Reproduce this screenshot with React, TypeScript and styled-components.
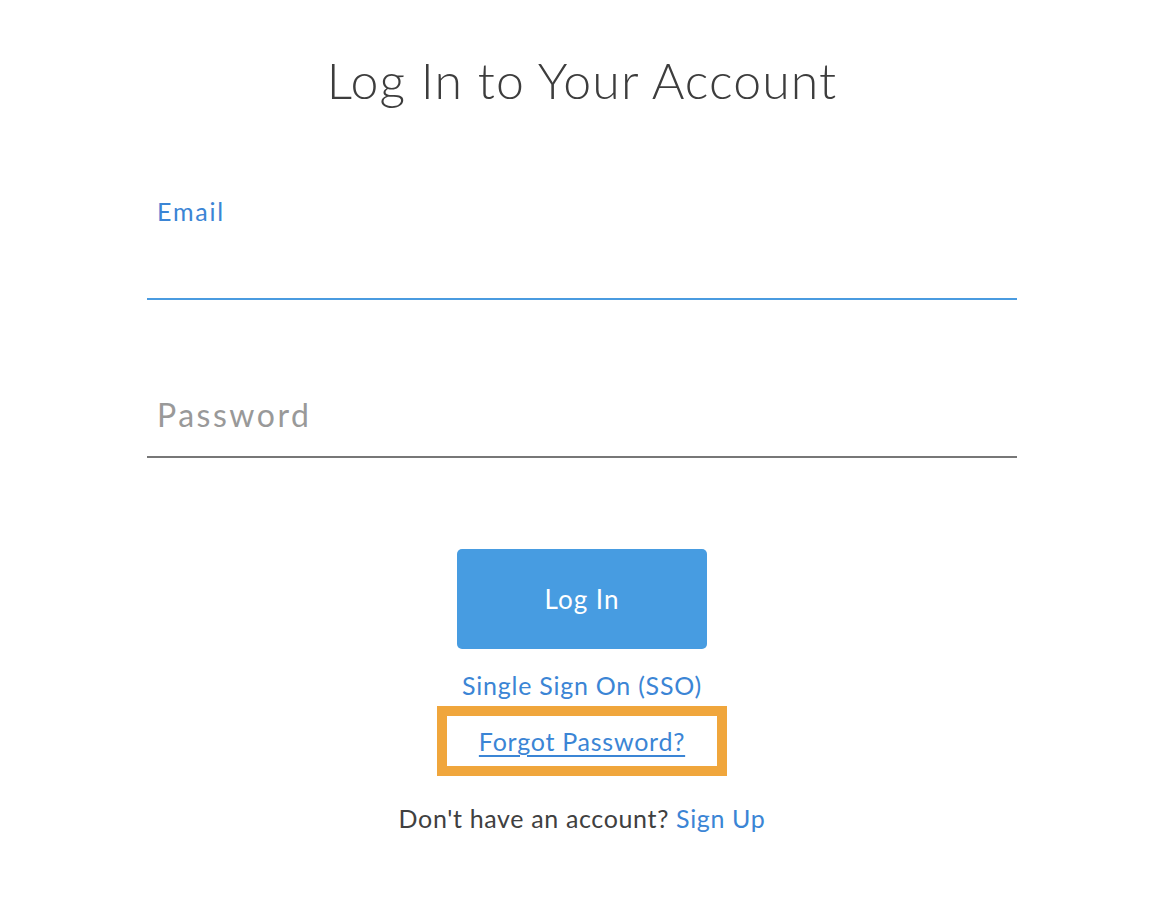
import React from "react";
import styled, { createGlobalStyle } from "styled-components";

const GlobalStyle = createGlobalStyle`
  html, body {
    margin: 0;
    padding: 0;
    background: #ffffff;
  }
  body {
    font-family: Lato, "Open Sans", "Liberation Sans", sans-serif;
    color: #404040;
  }
`;

const BLUE = "#3b85d5";

const Page = styled.main`
  width: 870px;
  margin: 0 auto;
  padding: 48px 0 60px 4px;
  display: flex;
  flex-direction: column;
`;

const Title = styled.h1`
  margin: 0;
  text-align: center;
  font-size: 50px;
  line-height: 64px;
  font-weight: 300;
  color: #3d3d3d;
  letter-spacing: 1.1px;
`;

const Field = styled.div<{ $gap: number }>`
  display: flex;
  flex-direction: column;
  margin-top: ${(p) => p.$gap}px;
`;

const Label = styled.label`
  padding-left: 10px;
  font-size: 25px;
  line-height: 30px;
  letter-spacing: 1.8px;
  color: ${BLUE};
`;

const Input = styled.input<{ $focused?: boolean }>`
  box-sizing: border-box;
  width: 100%;
  height: ${(p) => (p.$focused ? 74 : 66)}px;
  padding: 0 10px ${(p) => (p.$focused ? 0 : 20)}px;
  border: none;
  border-bottom: 2px solid ${(p) => (p.$focused ? "#4a9be0" : "#777777")};
  outline: none;
  background: transparent;
  font-family: inherit;
  font-size: 32px;
  letter-spacing: 2.5px;
  color: #404040;

  &::placeholder {
    color: #999999;
  }
`;

const Actions = styled.div`
  display: flex;
  flex-direction: column;
  align-items: center;
  margin-top: 91px;
`;

const SubmitButton = styled.button`
  width: 250px;
  height: 100px;
  border: none;
  border-radius: 5px;
  background: #479ce1;
  color: #ffffff;
  font-family: inherit;
  font-size: 26px;
  letter-spacing: 1px;
  cursor: pointer;
`;

const LinkText = styled.a<{ $underline?: boolean }>`
  color: ${BLUE};
  text-decoration: ${(p) => (p.$underline ? "underline" : "none")};
  text-underline-offset: 4px;
  text-decoration-thickness: 2px;
  cursor: pointer;
`;

const LinkLine = styled.div`
  font-size: 25px;
  line-height: 30px;
  letter-spacing: 0.75px;
`;

const SsoRow = styled(LinkLine)`
  margin-top: 21px;
`;

const Highlight = styled(LinkLine)`
  box-sizing: border-box;
  width: 290px;
  height: 70px;
  margin-top: 6px;
  border: 10px solid #f0a63c;
  display: flex;
  align-items: center;
  justify-content: center;
  background: #ffffff;
`;

const SignUpRow = styled.p`
  margin: 27px 0 0;
  font-size: 25px;
  line-height: 30px;
  letter-spacing: 0.65px;
  color: #404040;
`;

export default function App() {
  return (
    <>
      <GlobalStyle />
      <Page>
        <Title>Log In to Your Account</Title>

        <Field $gap={84}>
          <Label htmlFor="email">Email</Label>
          <Input id="email" type="email" $focused />
        </Field>

        <Field $gap={92}>
          <Input id="password" type="password" placeholder="Password" />
        </Field>

        <Actions>
          <SubmitButton type="button">Log In</SubmitButton>
          <SsoRow>
            <LinkText>Single Sign On (SSO)</LinkText>
          </SsoRow>
          <Highlight>
            <LinkText $underline>Forgot Password?</LinkText>
          </Highlight>
          <SignUpRow>
            Don't have an account? <LinkText>Sign Up</LinkText>
          </SignUpRow>
        </Actions>
      </Page>
    </>
  );
}
